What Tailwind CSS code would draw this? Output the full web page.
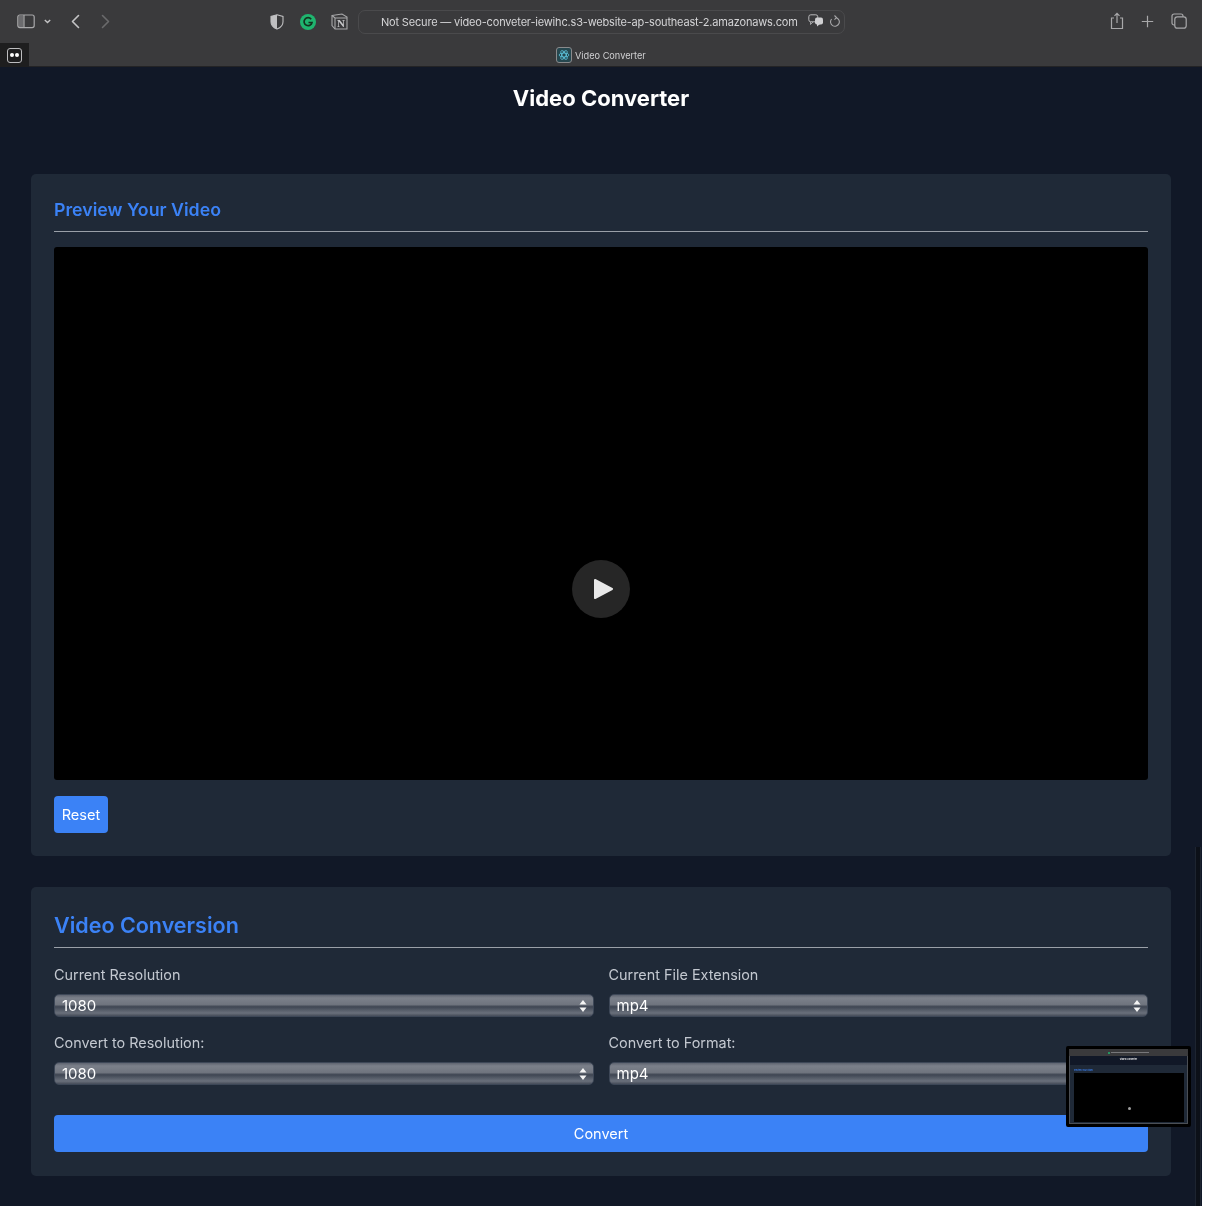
<!DOCTYPE html>
<html>
<head>
<meta charset="utf-8">
<script src="https://cdn.jsdelivr.net/npm/@tailwindcss/browser@4"></script>
</head>
<body class="bg-white font-['Inter',sans-serif]">
<div class="relative w-[1202px] h-[1206px] overflow-hidden bg-[#111827] blur-[0.5px]">
  <!-- browser chrome -->
  <header class="h-[67px] bg-[#3a3a3c] border-b border-[#232325] flex flex-col">
    <div class="h-[43px] flex items-center relative text-[#b4b4b6]">
      <svg class="absolute left-[17px] top-[14px]" width="18" height="15" viewBox="0 0 18 15" fill="none" stroke="#a8a8aa" stroke-width="1.2"><rect x="0.8" y="1" width="16.4" height="12.6" rx="2"/><path d="M7 1v12.6"/><rect x="1.5" y="2" width="5" height="11" fill="#a8a8aa" opacity=".45" stroke="none"/></svg>
      <svg class="absolute left-[44px] top-[19px]" width="7" height="5" viewBox="0 0 7 5" fill="none" stroke="#c4c4c6" stroke-width="1.4"><path d="M.8 1l2.700 2.600L6.200 1"/></svg>
      <svg class="absolute left-[71px] top-[14px]" width="9" height="15" viewBox="0 0 9 15" fill="none" stroke="#c4c4c6" stroke-width="1.6" stroke-linecap="round" stroke-linejoin="round"><path d="M7.500 1.500L1.500 7.500l6 6"/></svg>
      <svg class="absolute left-[101px] top-[14px]" width="9" height="15" viewBox="0 0 9 15" fill="none" stroke="#6a6a6c" stroke-width="1.6" stroke-linecap="round" stroke-linejoin="round"><path d="M1.500 1.500l6 6-6 6"/></svg>
      <svg class="absolute left-[270px] top-[14px]" width="14" height="16" viewBox="0 0 14 16"><path d="M7 .8l6 1.700v5.200c0 3.600-2.600 6-6 7.400C3.600 13.700 1 11.300 1 7.700V2.500z" fill="#3a3a3c" stroke="#c0c0c2" stroke-width="1.100"/><path d="M7 .8L1 2.500v5.200c0 3.600 2.600 6 6 7.400z" fill="#c0c0c2"/></svg>
      <svg class="absolute left-[300px] top-[14px]" width="16" height="16" viewBox="0 0 16 16"><circle cx="8" cy="8" r="8" fill="#1fb56f"/><path d="M11.200 5.200A4 4 0 1 0 12 8.500H8.500" fill="none" stroke="#14321f" stroke-width="1.700"/></svg>
      <svg class="absolute left-[331px] top-[13px]" width="17" height="17" viewBox="0 0 17 17" fill="none" stroke="#a8a8aa" stroke-width="1.100"><path d="M1 2.500L11 1l5 3v12H4L1 12.500z"/><path d="M1 2.500L4 5h12M4 5v11"/></svg>
      <span class="absolute left-[334px] top-[16px] w-[14px] text-center text-[11px] leading-[14px] font-bold text-[#c8c8ca] font-['Liberation_Serif',serif]">N</span>
      <div class="absolute left-[358px] top-[10px] w-[487px] h-[24px] rounded-[7px] border border-[#4a4a4c] flex items-center">
        <span class="pl-[22px] text-[11px] text-[#d4d4d6] whitespace-nowrap tracking-[-0.18px]">Not Secure — video-conveter-iewihc.s3-website-ap-southeast-2.amazonaws.com</span>
      </div>
      <svg class="absolute left-[808px] top-[14px]" width="16" height="13" viewBox="0 0 16 13"><rect x=".8" y=".8" width="9" height="7" rx="2" fill="none" stroke="#b8b8ba"/><path d="M2.500 8v2.500L5 8" fill="none" stroke="#b8b8ba" stroke-width=".8"/><rect x="7" y="3.500" width="8" height="7" rx="2" fill="#d0d0d2"/><path d="M9 10v2.500L12 10z" fill="#d0d0d2"/></svg>
      <svg class="absolute left-[829px] top-[15px]" width="11" height="13" viewBox="0 0 11 13" fill="none" stroke="#a8a8aa" stroke-width="1.100"><path d="M7 2.600A4.400 4.400 0 1 1 2.600 4M5.500 .5L7.500 2.600 5.500 4.600"/></svg>
      <svg class="absolute left-[1109px] top-[12px]" width="16" height="18" viewBox="0 0 16 18" fill="none" stroke="#a8a8aa" stroke-width="1.200"><path d="M5 6H2.500v10.500h11V6H11M8 11V1.500M5.500 3.800L8 1.300l2.500 2.500"/></svg>
      <svg class="absolute left-[1141px] top-[15px]" width="13" height="13" viewBox="0 0 13 13" fill="none" stroke="#a8a8aa" stroke-width="1.200"><path d="M6.500 .8v11.400M.8 6.500h11.400"/></svg>
      <svg class="absolute left-[1171px] top-[13px]" width="16" height="16" viewBox="0 0 16 16" fill="none" stroke="#a8a8aa" stroke-width="1.200"><rect x="3.800" y="3.800" width="11.400" height="11.400" rx="2.500"/><path d="M3.800 12H3a2 2 0 0 1-2-2V3a2 2 0 0 1 2-2h7a2 2 0 0 1 2 2v.8"/></svg>
    </div>
    <div class="relative flex-1">
      <div class="absolute left-0 top-0 w-[29px] h-[24px] bg-[#1e1e1f] flex items-center justify-center">
        <div class="w-[15px] h-[15px] rounded-[3px] border border-[#bdbdbf] flex items-center justify-center gap-px"><span class="w-[4px] h-[4px] rounded-full bg-white"></span><span class="w-[4px] h-[4px] rounded-full bg-white"></span></div>
      </div>
      <div class="absolute left-[556px] top-[4px] flex items-center gap-[3px]">
        <div class="w-[16px] h-[16px] rounded-[3px] border border-[#8a8a8c] bg-[#26474f] flex items-center justify-center">
          <svg width="12" height="12" viewBox="0 0 12 12" fill="none" stroke="#5cc4dc" stroke-width=".8"><ellipse cx="6" cy="6" rx="5" ry="2"/><ellipse cx="6" cy="6" rx="5" ry="2" transform="rotate(60 6 6)"/><ellipse cx="6" cy="6" rx="5" ry="2" transform="rotate(120 6 6)"/></svg>
        </div>
        <span class="mt-[1px] text-[9.2px] text-[#d0d0d2] leading-none whitespace-nowrap">Video Converter</span>
      </div>
    </div>
  </header>

  <!-- page -->
  <h1 class="mt-[17px] h-[29px] text-center text-[22px] leading-[29px] font-bold text-white">Video Converter</h1>

  <main class="px-[31px] pt-[61px] flex flex-col gap-[31px]">
    <section class="h-[682px] bg-[#1f2937] rounded-[5px] px-[23px] pt-[23px]">
      <h2 class="h-[35px] border-b border-[#9aa0a8] text-[17.75px] leading-[26px] font-semibold text-[#3b82f6]">Preview Your Video</h2>
      <div class="mt-[15px] h-[533px] bg-black rounded-[3px] flex items-center justify-center pt-[150px]">
        <div class="w-[58px] h-[58px] rounded-full bg-[#262626] flex items-center justify-center">
          <svg width="22" height="24" viewBox="0 0 22 24" class="ml-[5px]"><path d="M2 3l17 9-17 9z" fill="#e8e8e8" stroke="#e8e8e8" stroke-width="2" stroke-linejoin="round"/></svg>
        </div>
      </div>
      <button class="mt-[16px] w-[54px] h-[37px] pt-[2px] rounded-[4px] bg-[#3b82f6] text-white text-[14.6px]">Reset</button>
    </section>

    <section class="h-[289px] bg-[#1f2937] rounded-[5px] px-[23px] pt-[23px]">
      <h2 class="h-[38px] border-b border-[#9aa0a8] text-[21.5px] leading-[31px] font-semibold text-[#3b82f6]">Video Conversion</h2>
      <div class="mt-[16px] grid grid-cols-2 gap-x-[15px] gap-y-[15px]">
        <div>
          <p class="h-[22px] text-[14.4px] leading-[22px] text-[#c3c8d0]">Current Resolution</p>
          <div class="mt-[8px] h-[23px] rounded-[5px] border border-[#3d4757] bg-[linear-gradient(#5e6470_0%,#7b808a_14%,#70757f_45%,#3e4552_56%,#565d69_72%,#6a707b_86%,#454c59_100%)] flex items-center justify-between pl-[7px] pr-[6px] text-[15px] text-white"><span class="pt-px">1080</span><svg width="8" height="14" viewBox="0 0 8 14" fill="#f4f4f4"><path d="M4 1l3.500 4.500H.5zM4 13l3.500-4.500H.5z"/></svg></div>
        </div>
        <div>
          <p class="h-[22px] text-[14.4px] leading-[22px] text-[#c3c8d0]">Current File Extension</p>
          <div class="mt-[8px] h-[23px] rounded-[5px] border border-[#3d4757] bg-[linear-gradient(#5e6470_0%,#7b808a_14%,#70757f_45%,#3e4552_56%,#565d69_72%,#6a707b_86%,#454c59_100%)] flex items-center justify-between pl-[7px] pr-[6px] text-[15px] text-white"><span class="pt-px">mp4</span><svg width="8" height="14" viewBox="0 0 8 14" fill="#f4f4f4"><path d="M4 1l3.500 4.500H.5zM4 13l3.500-4.500H.5z"/></svg></div>
        </div>
        <div>
          <p class="h-[22px] text-[14.4px] leading-[22px] text-[#c3c8d0]">Convert to Resolution:</p>
          <div class="mt-[8px] h-[23px] rounded-[5px] border border-[#3d4757] bg-[linear-gradient(#5e6470_0%,#7b808a_14%,#70757f_45%,#3e4552_56%,#565d69_72%,#6a707b_86%,#454c59_100%)] flex items-center justify-between pl-[7px] pr-[6px] text-[15px] text-white"><span class="pt-px">1080</span><svg width="8" height="14" viewBox="0 0 8 14" fill="#f4f4f4"><path d="M4 1l3.500 4.500H.5zM4 13l3.500-4.500H.5z"/></svg></div>
        </div>
        <div>
          <p class="h-[22px] text-[14.4px] leading-[22px] text-[#c3c8d0]">Convert to Format:</p>
          <div class="mt-[8px] h-[23px] rounded-[5px] border border-[#3d4757] bg-[linear-gradient(#5e6470_0%,#7b808a_14%,#70757f_45%,#3e4552_56%,#565d69_72%,#6a707b_86%,#454c59_100%)] flex items-center justify-between pl-[7px] pr-[6px] text-[15px] text-white"><span class="pt-px">mp4</span><svg width="8" height="14" viewBox="0 0 8 14" fill="#f4f4f4"><path d="M4 1l3.500 4.500H.5zM4 13l3.500-4.500H.5z"/></svg></div>
        </div>
      </div>
      <button class="mt-[30px] w-full h-[37px] rounded-[4px] bg-[#3b82f6] text-white text-[14.5px]">Convert</button>
    </section>
  </main>

  <!-- scrollbar -->
  <div class="absolute left-[1195px] top-[847px] w-[6px] h-[359px] bg-[#0c1018] border-x border-[#1d2430]"></div>

  <!-- window thumbnail -->
  <div class="absolute left-[1066px] top-[1046px] w-[125px] h-[81px] rounded-[2px] border-[3px] border-black bg-[#4b4f55] flex flex-col overflow-hidden">
    <div class="h-[7px] bg-[#3a3a3c] flex items-center justify-center gap-px"><span class="w-[2px] h-[2px] rounded-full bg-[#1fb56f]"></span><span class="w-[38px] h-[1px] bg-[#77777a]"></span></div>
    <div class="flex-1 mx-[1px] mb-[1px] bg-[#111827] flex flex-col">
      <p class="h-[9px] text-center text-[2.2px] leading-[8px] font-semibold text-white">Video Converter</p>
      <div class="flex-1 bg-[#1f2937] pl-[4px] pr-[3px] pt-[2px]">
        <p class="h-[6px] text-[2px] leading-[6px] font-semibold text-[#3b82f6]">Preview Your Video</p>
        <div class="h-[49px] bg-black flex items-center justify-center pt-[21px]"><span class="w-[3px] h-[3px] rounded-full bg-[#a0a0a0]"></span></div>
      </div>
    </div>
  </div>
</div>
</body>
</html>
